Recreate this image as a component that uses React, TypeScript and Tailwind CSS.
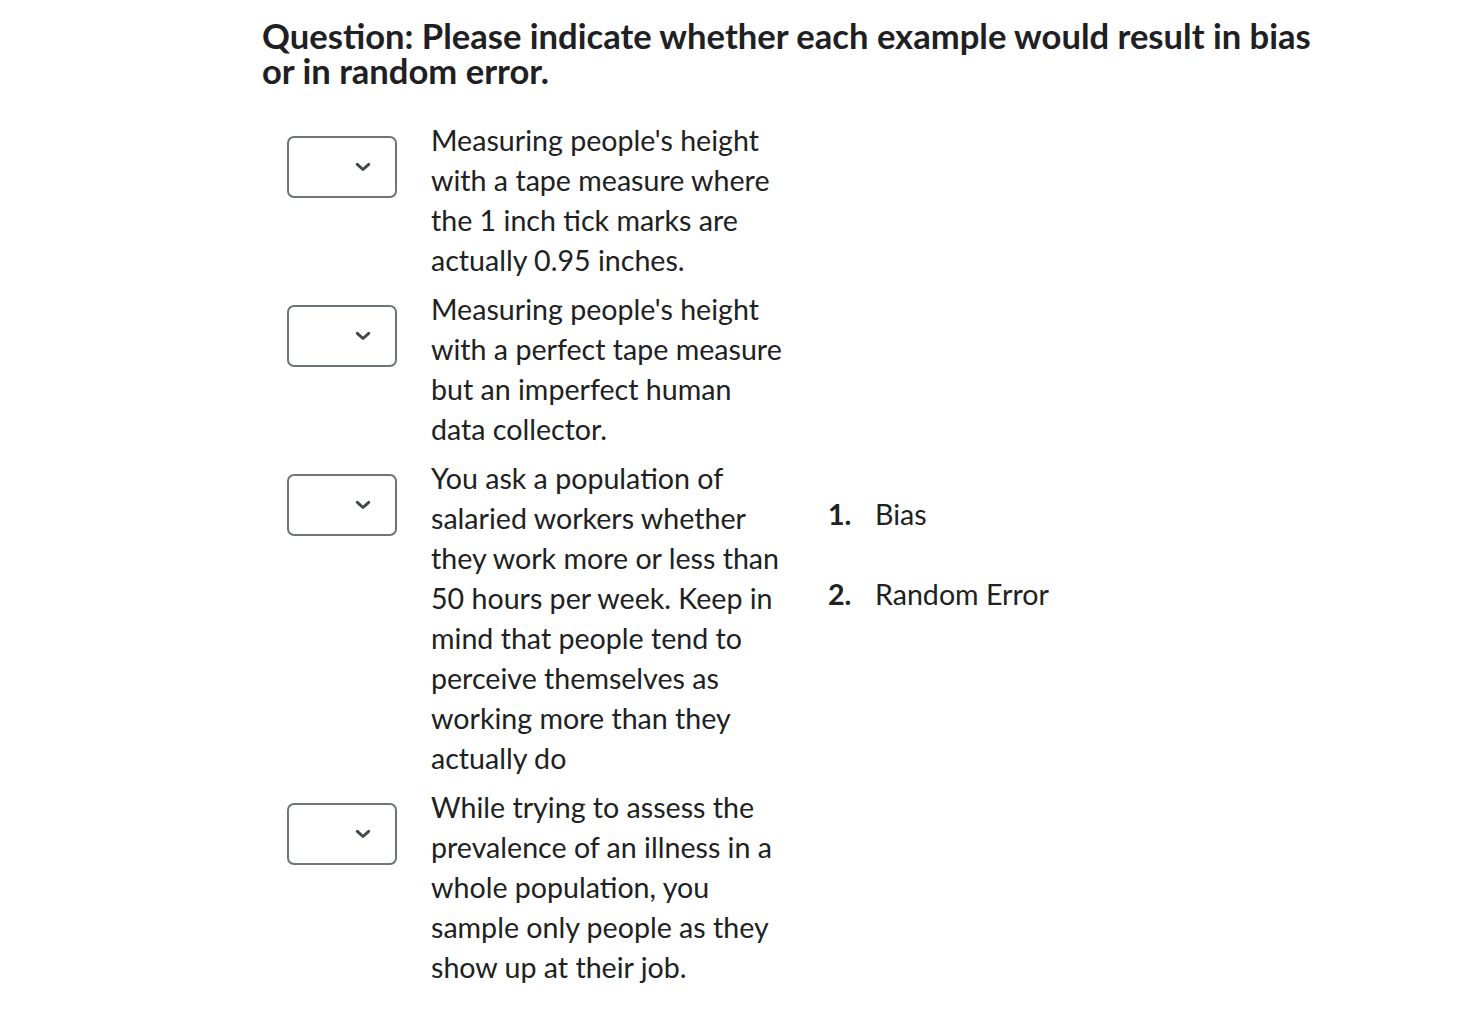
import React from "react";

const items = [
  "Measuring people's height with a tape measure where the 1 inch tick marks are actually 0.95 inches.",
  "Measuring people's height with a perfect tape measure but an imperfect human data collector.",
  "You ask a population of salaried workers whether they work more or less than 50 hours per week. Keep in mind that people tend to perceive themselves as working more than they actually do",
  "While trying to assess the prevalence of an illness in a whole population, you sample only people as they show up at their job.",
];

function Select() {
  return (
    <div className="mt-[16px] flex h-[62px] w-[110px] shrink-0 items-center justify-end rounded-[7px] border-2 border-[#6f7478] bg-white pr-[24px]">
      <svg width="16" height="10" viewBox="0 0 16 10" fill="none">
        <path d="M2.3 2.3l5.7 5.2 5.7-5.2" stroke="#43484c" strokeWidth="3" strokeLinecap="round" strokeLinejoin="round" />
      </svg>
    </div>
  );
}

export default function App() {
  return (
    <div className="min-h-screen bg-white font-['Lato','Liberation_Sans',sans-serif] text-[#202122]">
      <div className="pl-[262px] pt-[18px]">
        <h1 className="w-[1080px] text-[34.6px] font-bold leading-[35px] text-[#1e2023]">
          Question: Please indicate whether each example would result in bias or in random error.
        </h1>
        <div className="mt-[32px] flex items-center">
          <div className="flex flex-col gap-[9px] pl-[25px]">
            {items.map((t, i) => (
              <div key={i} className="flex">
                <Select />
                <p className="ml-[34px] w-[355px] text-[28.6px] leading-[40px]">{t}</p>
              </div>
            ))}
          </div>
          <ol className="ml-[42px] flex flex-col gap-[40px] text-[28.6px] leading-[40px]">
            <li className="flex">
              <span className="w-[47px] font-bold">1.</span>
              <span>Bias</span>
            </li>
            <li className="flex">
              <span className="w-[47px] font-bold">2.</span>
              <span>Random Error</span>
            </li>
          </ol>
        </div>
      </div>
    </div>
  );
}
